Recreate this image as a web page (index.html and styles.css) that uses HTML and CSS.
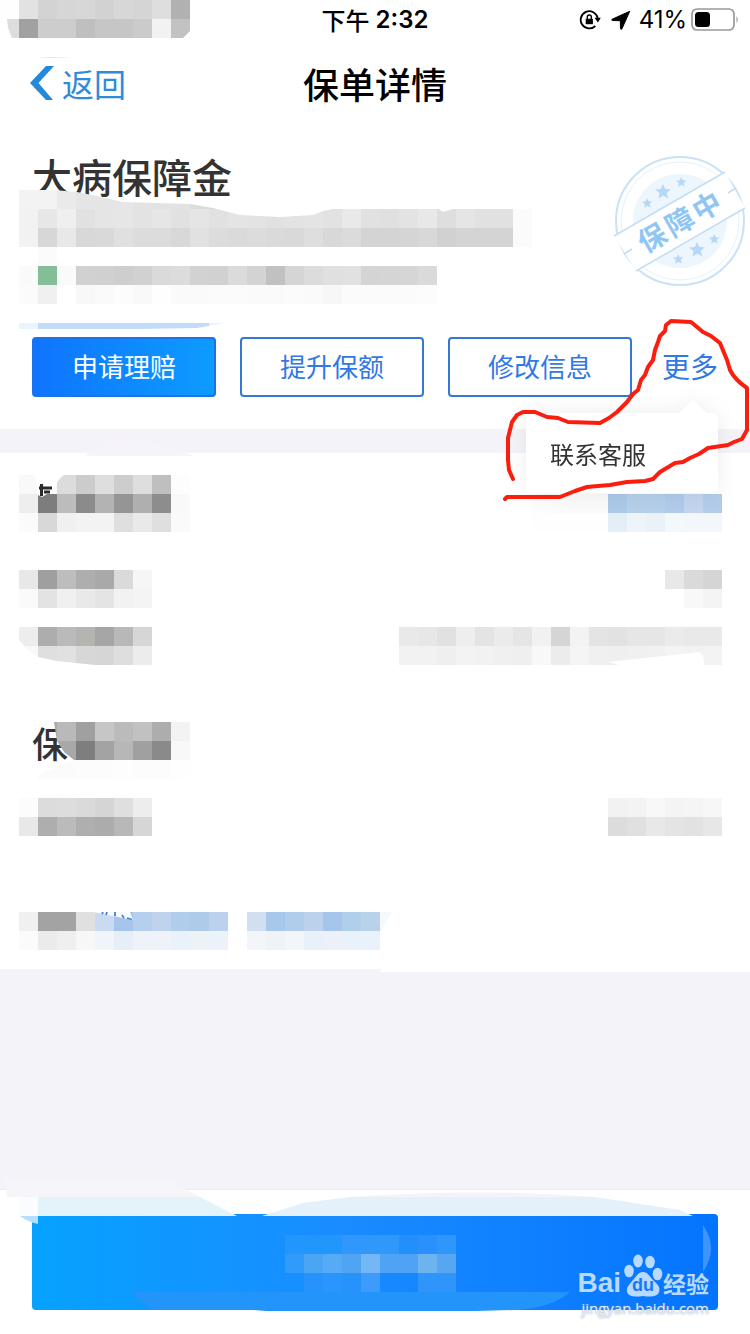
FILE: index.html
```html
<!DOCTYPE html>
<html lang="zh-CN">
<head>
<meta charset="utf-8">
<meta name="viewport" content="width=device-width, initial-scale=1">
<title>保单详情</title>
<link rel="stylesheet" href="styles.css">
</head>
<body>
<div class="page">
  <div class="status">
    <svg class="mosaic clip-status" data-cells="fe e2 d3 d6 d7 d2 d7 d5 de b1|dd a1 cd cd bf c6 c6 cb f2 c2"></svg>
    <div class="time"><span class="period">下午</span><span class="clock">2:32</span></div>
    <div class="indicators">
      <svg class="i-lock" width="22" height="22" viewBox="0 0 22 22"><path d="M18.700 9A8.600 8.600 0 1 0 16.300 17" fill="none" stroke="#000" stroke-width="1.800"/><path d="M15.600 8.800h6.200l-2.900 4.800z"/><path d="M6.700 9.800h7.200v5.400H6.700z"/><path d="M8.300 10V8a2 2 0 0 1 4 0v2" fill="none" stroke="#000" stroke-width="1.400"/></svg>
      <svg class="i-arrow" width="20" height="20" viewBox="0 0 20 20"><path d="M18.700 1.300 1.200 9.200c-.7.400-.5 1.300.3 1.300l7.800.2.200 7.900c0 .9 1 1 1.400.3z" stroke="#000"/></svg>
      <span class="percent">41%</span>
      <svg class="i-battery" width="48" height="24" viewBox="0 0 48 24"><rect x="1" y="1" width="42" height="21" rx="5" fill="none" stroke="#999" stroke-width="1.700"/><rect x="4" y="4" width="15" height="15" rx="3.500"/><path d="M45.500 8q2.500 3.500 0 7z" fill="#999"/></svg>
    </div>
  </div>

  <header class="nav">
    <a class="back" href="#"><svg width="24" height="36" viewBox="0 0 24 36"><path d="M16 1h8L8.500 18 23 35h-7L0 18z" fill="#2389da"/></svg>返回</a>
    <h1>保单详情</h1>
  </header>

  <main>
    <section class="policy">
      <h2>大病保障金</h2>
      <svg class="mosaic clip-summary" data-cells="f3 f3 ea e5 e5 e6 e3 e3 e3 dc d8 d8|f2 e7 ef e1 e5 e6 e3 e6 e1 e5 e1 e4 e3 e1 e3 e4 e2 e9 e1 e0 e3 e8 de e5 e1 e1 fb|f2 d7 e8 d8 d9 e0 dc dc d8 e1 dc da dc da d9 de d8 db d4 d4 d5 d8 d1 d4 d4 d4 fb|- fb|fa 83be96 fa d1 d0 ce d1 da dc d2 d1 db d3 c1 d5 dc e0 e1 d4 d5 d6 da|fb f0 - f8 fa fc f9 fe fa fa fb fb fa fa fb fa f7 fb fb fb fb fc"></svg>
      <div class="strip"></div>
      <svg class="stamp" width="160" height="160" viewBox="0 0 160 160">
        <circle cx="90" cy="81" r="64" fill="#fff" stroke="#c9e2f8" stroke-width="2"/>
        <circle cx="90" cy="81" r="59" fill="none" stroke="#e4f1fb"/>
        <circle cx="90" cy="81" r="47" fill="#edf5fd"/>
        <path d="M24 96 135 32 155 68 46 131z" fill="#fff"/>
        <path d="M24 96 135 32M46 131 155 68M34 114l8-5M138 53l8-5" stroke="#c1def7" stroke-width="1.500"/>
        <g fill="#b4d9f8">
          <path id="star" d="M73 44l2.200 5 5.600.2-4.200 3.700 1.800 5.400-5.200-2.800-4.800 3.200 1.200-5.600-4.400-3.500 5.600-.6z"/>
          <use href="#star" transform="translate(9 29) scale(.66)"/>
          <use href="#star" transform="translate(43 8) scale(.66)"/>
          <use href="#star" transform="translate(34 58)"/>
          <use href="#star" transform="translate(40 85) scale(.66)"/>
          <use href="#star" transform="translate(76 65) scale(.66)"/>
        </g>
        <text class="stamp-text" x="58 90 121" y="92" transform="rotate(-30 90 82)">保障中</text>
      </svg>
      <div class="actions">
        <button class="btn primary" type="button">申请理赔</button>
        <button class="btn" type="button">提升保额</button>
        <button class="btn" type="button">修改信息</button>
        <div class="more">
          <button class="more-btn" type="button">更多</button>
          <div class="popup"><button class="popup-item" type="button">联系客服</button></div>
        </div>
      </div>
    </section>

    <section class="details">
      <div class="row">
        <div class="cover">
          <svg class="mosaic" data-cells="f9 f9 dc cc de cd de bf fd|ee 7d bc 8b b3 95 af 8d f9|fb d8 f0 f3 f3 df e9 df fa"></svg>
          <svg class="scrap" width="57" height="24" viewBox="0 0 57 24"><path d="M16 0h29q-5 3-8 10-3 6-14 12l-4-2z" fill="#fff"/><path d="M22.500 9v12M20 13h13M25 17h6" stroke="#2b2b2b" stroke-width="3" fill="none"/></svg>
        </div>
        <svg class="mosaic" data-cells="-|fc fb fa fa acc9e8 b5cfeb b5cfeb b0cbeb c3d5ee b3ccea|fe fe fe fe e3eff6 edf4fa eaf2f8 f3f8fb f3f7fb f3f7fb"></svg>
      </div>
      <div class="row gap-m">
        <svg class="mosaic" data-cells="e8 9f bd ae a9 da f6|fa e3 f0 e9 e4 f2 f4"></svg>
        <svg class="mosaic" data-cells="e8 da d5|- f8 f4"></svg>
      </div>
      <div class="row gap-s">
        <svg class="mosaic clip-corner" data-cells="ed ad ba b4b4b1 a6 b8 d6|f8 df e1 d7 d6 de ec"></svg>
        <div class="cover">
          <svg class="mosaic" data-cells="e9 e7 e1 ee e4 eb e5 f1 d5 f3 e4 e2 e6 e6 eb e9 e9|f2 f2 ef f3 f2 f0 ef f8 ec f5 f0 ef f0 f1 f4 f2 f3"></svg>
          <svg class="scrap" width="323" height="38" viewBox="0 0 323 38"><path d="M209 35 264 29l36-4q5 1 5 13h-85z" fill="#fff"/></svg>
        </div>
      </div>
      <div class="row gap-l">
        <div class="cover heading">
          <h2>保</h2>
          <svg class="mosaic clip-heading" data-cells="a8 b9 a0 c6 bb c1 ad f3|a8 a8 7e a3 b7 a0 8a f8|fb fb fc fc fd fc fc fe"></svg>
        </div>
      </div>
      <div class="row gap-s">
        <svg class="mosaic" data-cells="fc dc dd da d5 df ed|e8 ae bb af ac b8 d6"></svg>
        <svg class="mosaic" data-cells="f2 f3 f8 f4 f5 f7|dc e0 e8 e4 e2 e7"></svg>
      </div>
      <div class="row links gap-xl">
        <div class="cover">
          <svg class="mosaic" data-cells="f0 a3 a3 e0 c9daf1 a5c6ea b5d0ee bfd3ee b1cdec aecbea bcd1ee|fb eb ef f7 eff5fa e6eef8 edf3f8 edf3f8 e9f1fa edf2f6 ecf2fa"></svg>
          <svg class="scrap" width="209" height="12" viewBox="0 0 209 12"><path d="M74 0h37l3 8z" fill="#f6fcff"/><path d="M84 0l-1 2M88 0l-1 3M96 0v4M103 3l2 3M108 6l5 1.500" stroke="#4a80d0" stroke-width="1.800"/></svg>
        </div>
        <svg class="mosaic clip-link" data-cells="d1dff0 a6c8eb b0cdeb bcd2ec a6c5ec b0cfea b9d2ec f5f9fe|f2f6fa edf3f7 f2f6fa e8f0f9 edf0f9 e9f1fa e9f1fa"></svg>
      </div>
    </section>
  </main>

  <footer class="footer">
    <button class="submit" type="button" aria-label="提交"><svg class="mosaic" data-cells="2196fc 2196fc 2196fc 3098fd 3098fd 3098fb 228ffa 2a90fb 2f97fc|309bfa 4aa5f5 57aaf6 50a5f2 73b7f4 4fa2f4 4fa2f4 6db3f0 57a6f2|- 2693fb 2a95fc 2693fb 3c9bfb - - 2f95fa 2f95fa"></svg></button>
    <svg class="smears" viewBox="0 0 750 156">
      <path d="M4 1h163l33 18H7z" fill="#f6f5fa"/>
      <path d="M19 19h19v19H19z" fill="#fafcff"/>
      <path d="M38 19h162l37 19H38z" fill="#e4f2fa"/>
      <path d="M20 38h18v8q-10-2-18-8z" fill="#b5dffb"/>
      <path d="M350 19q130-9 245 0z" fill="#f5f3f9"/>
      <path d="M262 38l41-13 47-6h245l85 13 13 6z" fill="#e4f1fa"/>
      <path d="M132 114h438q-18 16-56 18l-38 1H266l-13-1H155q-14-6-23-18z" fill="#2395fa"/>
      <path d="M703 47q16 23 0 47z" fill="#3d95fe"/>
    </svg>
    <div class="watermark">
      <div class="logo">
        <span class="bai">Bai</span>
        <svg width="40" height="44" viewBox="0 0 40 44" fill="#b9d9ff"><ellipse cx="6" cy="18" rx="4.800" ry="6.300"/><ellipse cx="15" cy="8" rx="4.800" ry="6.500"/><ellipse cx="27" cy="9" rx="4.800" ry="6.300"/><ellipse cx="34.500" cy="21" rx="4.800" ry="6.300"/><path d="M20 19c5 0 7 5 10 8 4 4 8 7 6 12-2 5-8 5-16 4-8 1-14 1-16-4-1-5 3-8 6-12 3-3 5-8 10-8z"/><text class="du" x="20" y="38">du</text></svg>
        <span class="exp">经验</span>
      </div>
      <div class="url">jingyan.baidu.com</div>
    </div>
  </footer>

  <svg class="marks" viewBox="0 0 750 1334">
    <path d="M84 456q20-12 35-18 20-1 75 18z" fill="#f6f4fa"/>
    <path d="M0 969h381v3H0z" fill="#f6f4fa"/>
    <path d="M38 58q12-2 33 0z" fill="#d8eaf8"/>
    <path d="M513 479 509 470 508 460 508 438 512 422 517 415 523 412 535 412 547 417 558 418 568 422 600 423 609 418 617 412 627 402 633 394 638 390 641 380 645 375 648 367 653 360 655 350 658 342 660 336 665 331 666 325 671 321 691 322 703 332 711 336 720 343 727 360 730 370Q735 380 747 388V430L742 439 734 442 728 445 708 448 699 454 690 458 683 462 675 463 660 472 653 479 645 481 627 482 610 485 598 486 587 487 575 491 560 497H507L505 499" fill="none" stroke="#fb1d0d" stroke-width="4" stroke-linejoin="round" stroke-linecap="round"/>
  </svg>
</div>
<script src="mosaic.js"></script>
</body>
</html>
```

FILE: styles.css
```css
* { box-sizing: border-box; }

body {
  margin: 0;
  background: #fff;
  color: #333;
  font-family: "Noto Sans CJK SC", sans-serif;
}

h1, h2 { margin: 0; font-weight: 500; }

button {
  margin: 0;
  padding: 0;
  border: 0;
  background: none;
  font-family: inherit;
}

svg { display: block; flex: none; }

.page {
  position: relative;
  display: flex;
  flex-direction: column;
  min-height: 100vh;
  overflow: hidden;
  background: #f5f3fa;
}

/* status bar */
.status {
  display: grid;
  grid-template-columns: 1fr auto 1fr;
  height: 40px;
  background: #fff;
  color: #000;
}

.time {
  display: flex;
  align-items: center;
  gap: 6px;
  font-size: 24px;
  line-height: 40px;
}

.period { font-weight: 500; line-height: 38px; }
.clock { font-family: Inter, sans-serif; font-weight: 600; }

.indicators {
  display: flex;
  align-items: center;
  justify-content: flex-end;
  padding-right: 11px;
}

.i-arrow { margin: 0 8px 0 10px; }
.percent { font: 24px/40px Inter, sans-serif; }
.i-battery { margin-left: 4px; }

/* navigation */
.nav {
  display: grid;
  grid-template-columns: 1fr auto 1fr;
  align-items: center;
  height: 88px;
  padding: 0 30px 2px;
  background: #fff;
}

.nav h1 { color: #000; font-size: 36px; line-height: 52px; }

.back {
  display: flex;
  align-items: center;
  gap: 8px;
  color: #2f8bdc;
  font-size: 32px;
  font-weight: 400;
  line-height: 44px;
  text-decoration: none;
}

/* policy summary */
.policy {
  position: relative;
  padding: 20px 32px 32px 19px;
  background: #fff;
}

.policy h2 {
  padding-left: 13px;
  font-size: 40px;
  line-height: 56px;
}

.clip-summary {
  margin-top: -14px;
  clip-path: polygon(0 0, 34px 0, 58px 2px, 78px 6px, 104px 12px, 171px 14px, 194px 18px, 221px 25px, 261px 27px, 294px 25px, 304px 21px, 314px 19px, 420px 19px, 424px 22px, 434px 19px, 100% 19px, 100% 100%, 0 100%);
}

.strip {
  width: 206px;
  height: 6px;
  margin-top: 19px;
  background: linear-gradient(90deg, #eaf4ff 19px, #c1dcfb 19px, #c1dcfb 190px, #eaf4ff 190px);
  clip-path: polygon(0 0, 100% 0, 190px 3px, 178px 5px, 120px 6px, 0 6px);
}

.stamp { position: absolute; top: 12px; right: 0; }

.stamp-text {
  fill: #8fc6f5;
  font-size: 28px;
  font-weight: 700;
  text-anchor: middle;
}

.actions {
  display: grid;
  grid-template-columns: 1fr 1fr 1fr 62px;
  gap: 24px;
  padding: 8px 0 0 13px;
}

.btn {
  height: 60px;
  padding-bottom: 2px;
  border: 2px solid #3577d4;
  border-radius: 4px;
  color: #2f78e6;
  font-size: 26px;
  line-height: 40px;
}

.primary {
  border-color: #1c72e6;
  background: linear-gradient(90deg, #0f74ff, #0d9cff);
  color: #fff;
}

.more { position: relative; text-align: right; }

.more-btn {
  height: 60px;
  padding-bottom: 2px;
  color: #2f78e6;
  font-size: 28px;
  line-height: 40px;
}

.popup {
  position: absolute;
  z-index: 2;
  top: 76px;
  right: 0;
  width: 192px;
  border-radius: 6px;
  background: #fff;
  filter: drop-shadow(0 0 10px rgba(0, 0, 0, 0.07));
}

.popup::before {
  content: "";
  position: absolute;
  top: -13px;
  right: 10px;
  width: 30px;
  height: 14px;
  background: #fff;
  clip-path: polygon(50% 0, 100% 100%, 0 100%);
}

.popup-item {
  display: block;
  width: 100%;
  height: 80px;
  padding: 0 24px;
  color: #333;
  font-size: 24px;
  text-align: left;
}

/* policy details */
.details {
  margin-top: 24px;
  padding: 22px 28px 22px 19px;
  background: #fff;
}

.row { display: flex; justify-content: space-between; }
.links { justify-content: flex-start; gap: 19px; }
.gap-s { margin-top: 19px; }
.gap-m { margin-top: 38px; }
.gap-l { margin-top: 57px; }
.gap-xl { margin-top: 76px; }

.cover { position: relative; }
.scrap { position: absolute; top: 0; left: 0; }

.heading { height: 57px; padding-left: 13px; }
.heading h2 { font-size: 36px; line-height: 40px; }
.heading .mosaic { position: absolute; top: 0; left: 19px; }

.clip-status { clip-path: polygon(0 0, 100% 0, 100% 31px, 183px 100%, 12px 100%, 8px 28px, 7px 19px, 0 19px); }
.clip-corner { clip-path: polygon(0 0, 100% 0, 100% 100%, 76px 100%, 38px 34px, 19px 30px, 7px 21px, 0 13px); }
.clip-heading { clip-path: polygon(16px 0, 100% 0, 100% 100%, 0 100%, 0 53px, 36px 38px, 26px 30px, 19px 19px); }
.clip-link { clip-path: polygon(0 0, 145px 0, 133px 20px, 133px 100%, 0 100%); }

/* footer */
.footer {
  position: relative;
  margin-top: auto;
  padding: 24px 32px;
  border-top: 1px solid #edeaf3;
  background: #fff;
}

.submit {
  display: flex;
  align-items: center;
  justify-content: center;
  width: 100%;
  height: 96px;
  padding: 2px 10px 0 0;
  border-radius: 4px;
  background: linear-gradient(90deg, #06a2ff, #1a8cff 45%, #0474ff);
}

.smears { position: absolute; top: -12px; left: 0; width: 100%; }

.watermark {
  position: absolute;
  right: 41px;
  bottom: 15px;
  color: #b9d9ff;
}

.logo {
  display: flex;
  align-items: flex-end;
  justify-content: flex-end;
  height: 44px;
}

.bai { margin-right: 2px; font: 700 28px/28px "Liberation Sans", sans-serif; }
.exp { font-size: 23px; font-weight: 700; line-height: 28px; }

.du {
  fill: #1678fa;
  font: 700 18px "Liberation Sans", sans-serif;
  text-anchor: middle;
}

.url {
  color: #e2eeff;
  font: 15px/22px "Open Sans", sans-serif;
  text-align: right;
  text-shadow: 0 0 2px #8a95a5;
}

.marks {
  position: absolute;
  z-index: 3;
  top: 0;
  left: 0;
  width: 100%;
  pointer-events: none;
}
```

FILE: mosaic.js
```js
// Draws each redaction mosaic from its data-cells: rows split by "|", cells by spaces.
// A cell is a two-digit grey, a six-digit colour, or "-" for an empty one.
const CELL = 19;
const NS = "http://www.w3.org/2000/svg";

document.querySelectorAll(".mosaic").forEach((svg) => {
  const rows = svg.dataset.cells.split("|").map((row) => row.trim().split(/\s+/));
  const cols = Math.max(...rows.map((row) => row.length));
  svg.setAttribute("width", cols * CELL);
  svg.setAttribute("height", rows.length * CELL);
  svg.setAttribute("aria-hidden", "true");
  svg.setAttribute("shape-rendering", "crispEdges");
  rows.forEach((row, y) => row.forEach((cell, x) => {
    if (cell === "-") return;
    const rect = document.createElementNS(NS, "rect");
    rect.setAttribute("x", x * CELL);
    rect.setAttribute("y", y * CELL);
    rect.setAttribute("width", CELL);
    rect.setAttribute("height", CELL);
    rect.setAttribute("fill", "#" + (cell.length === 2 ? cell.repeat(3) : cell));
    svg.appendChild(rect);
  }));
});
```
